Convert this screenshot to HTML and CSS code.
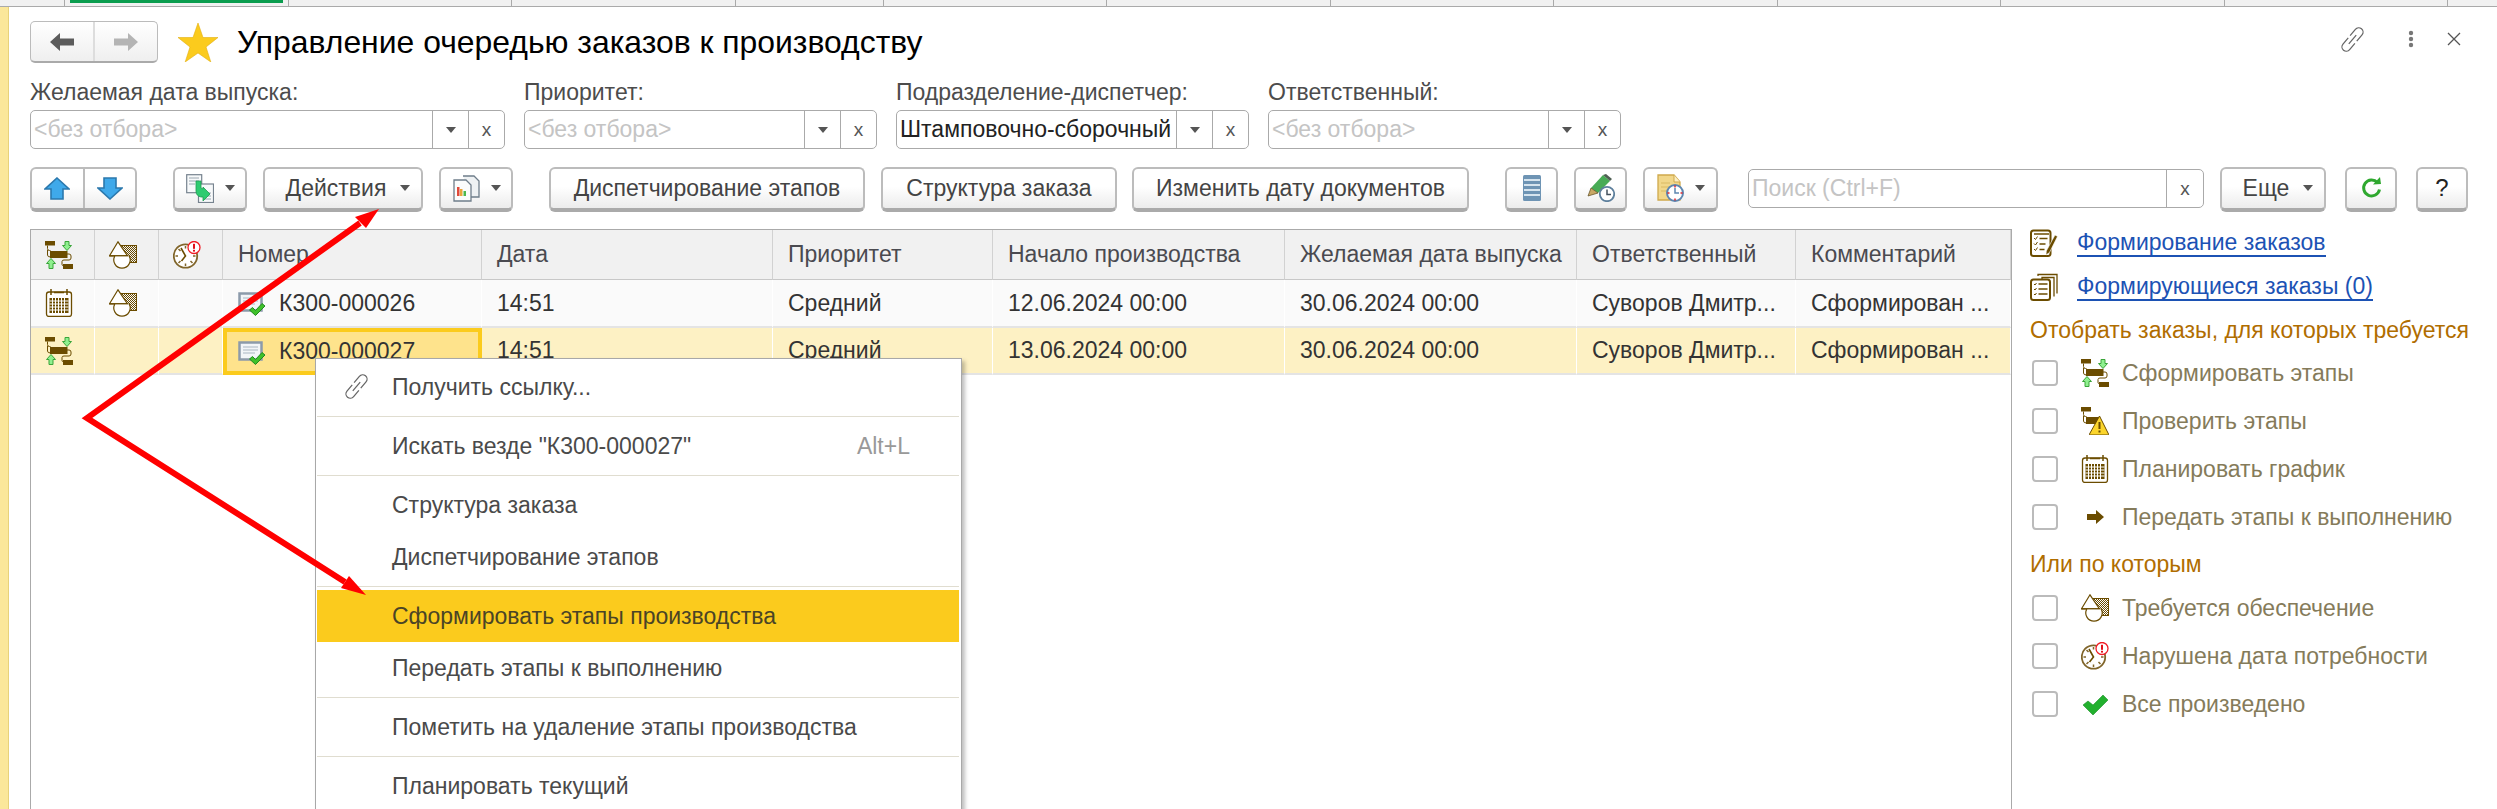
FILE: index.html
```html
<!DOCTYPE html>
<html>
<head>
<meta charset="UTF-8">
<title>Управление очередью заказов к производству</title>
<link rel="stylesheet" href="styles.css">
</head>
<body>
	<!-- общие значки -->
	<svg class="defs">
		<defs>
			<pattern id="hatch" width="2" height="2" patternUnits="userSpaceOnUse">
				<rect width="1" height="1" fill="#6b4c00"/>
				<rect x="1" y="1" width="1" height="1" fill="#6b4c00"/>
			</pattern>
		</defs>
		<symbol id="iStages" viewBox="0 0 28 28">
			<path d="M2.500 4.500v3q0 2 2 2h1M2.500 9v5q0 2 3 2M22 13h2q2 0 2 2v2q0 2-2 2h-5q-2 0-2 1.500v3q0 1 1 1" fill="none" stroke="#6b4c00"/>
			<rect x="0" y="0" width="10" height="4.500" fill="#6b4c00"/>
			<rect x="5" y="10" width="17.500" height="7" fill="#6b4c00"/>
			<rect x="18" y="23" width="10" height="5" fill="#6b4c00"/>
			<path d="M20 .5h4v4h2.500l-4.500 5-4.500-5h2.500z" fill="#8ff08f" stroke="#3aa53a"/>
			<path d="M6 17.500l4.500 5h-2.500v5h-4v-5h-2.500z" fill="#8ff08f" stroke="#3aa53a"/>
		</symbol>
		<symbol id="iCheckStages" viewBox="0 0 28 28">
			<path d="M2.500 4.500v3q0 2 2 2h1M2.500 9v5q0 2 3 2" fill="none" stroke="#6b4c00"/>
			<rect x="0" y="0" width="10" height="4.500" fill="#6b4c00"/>
			<rect x="5" y="10" width="14" height="7" fill="#6b4c00"/>
			<path d="M18.500 9l9 18q.3 1-1 1h-17q-1.300 0-1-1z" fill="#fbd52c" stroke="#6b4c00"/>
			<rect x="17.500" y="15" width="2" height="7" fill="#6b4c00"/>
			<rect x="17.500" y="23.500" width="2" height="2" fill="#6b4c00"/>
		</symbol>
		<symbol id="iSupply" viewBox="0 0 28 28">
			<rect x="11" y="4.500" width="16.500" height="17" fill="url(#hatch)" stroke="#6b4c00"/>
			<path d="M9 .8l9.500 14h-18z" fill="#fff" stroke="#6b4c00" stroke-width="1.200"/>
			<path d="M5.800 15a8.200 8.200 0 1 0 14.400 0z" fill="#fff"/>
			<path d="M5.800 15a8.200 8.200 0 1 0 14.400 0" fill="none" stroke="#6b4c00" stroke-width="1.200"/>
			<path d="M.5 14.800h19" stroke="#6b4c00" stroke-width="1.200"/>
		</symbol>
		<symbol id="iClock" viewBox="0 0 28 28">
			<circle cx="12.500" cy="15" r="11.700" fill="#fff" stroke="#80652a" stroke-width="1.800"/>
			<path d="M12.500 5v2.500M12.500 22.500v2.500M2.500 15h2.500M20 15h2.500M5.500 8l2 2M5.500 22l2-2M19.500 22l-2-2" stroke="#80652a" stroke-width="1.500"/>
			<path d="M8 7l4.500 8-4 5" fill="none" stroke="#6b4c00" stroke-width="1.600"/>
			<circle cx="21" cy="6.500" r="6" fill="#fff" stroke="#f01c24" stroke-width="1.300"/>
			<rect x="20" y="2.800" width="2" height="5" fill="#e01018"/>
			<rect x="20" y="8.800" width="2" height="1.800" fill="#e01018"/>
		</symbol>
		<symbol id="iCalendar" viewBox="0 0 28 28">
			<rect x="1.500" y="3" width="25" height="24.500" rx="2.500" fill="#fff" stroke="#6b4c00" stroke-width="1.300"/>
			<path d="M6 0v6M22 0v6M9 3.500h10" stroke="#6b4c00" stroke-width="1.500" fill="none"/>
			<rect x="4.500" y="9" width="19" height="15" fill="#6b4c00"/>
			<path d="M7.500 9v15M10.500 9v15M13.500 9v15M16.500 9v15M19.500 9v15M4.500 12h19M4.500 15h19M4.500 18h19M4.500 21h19" stroke="#fff" stroke-width="1"/>
		</symbol>
		<symbol id="iDocCheck" viewBox="0 0 28 24">
			<rect x="1.500" y="1.500" width="22" height="17" fill="#f2f5f8" stroke="#8c9aaa" stroke-width="2.500"/>
			<path d="M5 6h15M5 9h15M5 12h12" stroke="#a9b6c2" stroke-width="1"/>
			<path d="M14.500 15.500l3 3 6.500-7 3 2.500-9.500 9.500-6-5.500z" fill="#3fc02a" stroke="#1f8a1f"/>
		</symbol>
		<symbol id="iListPen" viewBox="0 0 28 28">
			<rect x="1" y="1.500" width="19.500" height="25.500" rx="2.500" fill="#fff" stroke="#6b4c00" stroke-width="2"/>
			<path d="M4 5h15" stroke="#6b4c00" stroke-width="1.500"/>
			<path d="M4 9l1.500 1.500 2-3M4 14.500l1.500 1.500 2-3M4 20l1.500 1.500 2-3" fill="none" stroke="#6b4c00"/>
			<path d="M9.500 9.500h8M9.500 15h6M9.500 20.500h5" stroke="#6b4c00" stroke-width="1.500"/>
			<path d="M25 6l2.500 1.500-8 16-3.500 2.500.3-4z" fill="#6b4c00" stroke="#fff" stroke-width=".6"/>
		</symbol>
		<symbol id="iListStack" viewBox="0 0 28 28">
			<path d="M8 3V1.500h19v19M12 6.500V4.500h12v19" fill="none" stroke="#6b4c00" stroke-width="1.300"/>
			<rect x="1" y="6.500" width="19" height="20.500" rx="2.500" fill="#fff" stroke="#6b4c00" stroke-width="2"/>
			<path d="M4 11l1 1 1.500-2M4 16l1 1 1.500-2M4 21l1 1 1.500-2" fill="none" stroke="#6b4c00"/>
			<path d="M8.500 11h9M8.500 16h9M8.500 21h9" stroke="#6b4c00" stroke-width="1.500"/>
		</symbol>
		<symbol id="iLink" viewBox="0 0 28 28">
			<g transform="rotate(-50 14 14)" fill="none" stroke="#666" stroke-width="1.300">
				<path d="M12.500 9.500H4a4.500 4.500 0 0 0 0 9h8.500"/>
				<path d="M15.500 9.500H24a4.500 4.500 0 0 1 0 9h-8.500"/>
				<path d="M8 14h12"/>
			</g>
		</symbol>
	</svg>

	<div class="tabs">
		<div class="tab tabFirst"></div>
		<div class="tab tabActive"><span class="tabMark"></span></div>
		<div class="tab"></div>
		<div class="tab"></div>
		<div class="tab tabShort"></div>
		<div class="tab"></div>
		<div class="tab"></div>
		<div class="tab"></div>
		<div class="tab"></div>
		<div class="tab"></div>
		<div class="tab"></div>
		<div class="tab"></div>
	</div>

	<div class="form">
		<div class="titleRow">
			<div class="navButtons">
				<button class="navBtn">
					<svg width="24" height="18" viewBox="0 0 24 18"><path d="M0 9l10-9v5.500h14v7h-14v5.500z" fill="#5c5c5c"/></svg>
				</button>
				<button class="navBtn">
					<svg width="24" height="18" viewBox="0 0 24 18"><path d="M24 9l-10-9v5.500h-14v7h14v5.500z" fill="#b4b4b4"/></svg>
				</button>
			</div>
			<svg class="star" width="40" height="39" viewBox="0 0 40 39"><path d="M20 0l5 14.500h15l-12 9.500 4.800 15-12.800-9-12.800 9 4.800-15-12-9.500h15z" fill="#fbcb1d" stroke="#e2ae10" stroke-width=".6"/></svg>
			<h1 class="title">Управление очередью заказов к производству</h1>
			<div class="titleTools">
				<svg class="toolLink" width="27" height="27"><use href="#iLink"/></svg>
				<svg class="dots" width="6" height="18" viewBox="0 0 6 18"><circle cx="3" cy="3" r="2.200" fill="#777"/><circle cx="3" cy="9" r="2.200" fill="#777"/><circle cx="3" cy="15" r="2.200" fill="#777"/></svg>
				<svg width="14" height="14" viewBox="0 0 14 14"><path d="M1 1l12 12M13 1l-12 12" stroke="#555" stroke-width="1.300"/></svg>
			</div>
		</div>

		<div class="filters">
			<div class="filter">
				<label class="filterLabel">Желаемая дата выпуска:</label>
				<div class="field"><span class="fieldText empty">&lt;без отбора&gt;</span><span class="fieldBtn"><i class="caret"></i></span><span class="fieldBtn">x</span></div>
			</div>
			<div class="filter">
				<label class="filterLabel">Приоритет:</label>
				<div class="field"><span class="fieldText empty">&lt;без отбора&gt;</span><span class="fieldBtn"><i class="caret"></i></span><span class="fieldBtn">x</span></div>
			</div>
			<div class="filter">
				<label class="filterLabel">Подразделение-диспетчер:</label>
				<div class="field"><span class="fieldText">Штамповочно-сборочный</span><span class="fieldBtn"><i class="caret"></i></span><span class="fieldBtn">x</span></div>
			</div>
			<div class="filter">
				<label class="filterLabel">Ответственный:</label>
				<div class="field"><span class="fieldText empty">&lt;без отбора&gt;</span><span class="fieldBtn"><i class="caret"></i></span><span class="fieldBtn">x</span></div>
			</div>
		</div>

		<div class="toolbar">
			<div class="btn btnPair">
				<span class="pairPart">
					<svg width="26" height="23" viewBox="0 0 26 23"><path d="M13 1l12 11h-6v10h-12v-10h-6z" fill="#3fa9ea" stroke="#2b78ad" stroke-width="1.600"/></svg>
				</span>
				<span class="pairPart">
					<svg width="26" height="23" viewBox="0 0 26 23"><path d="M13 22l12-11h-6v-10h-12v10h-6z" fill="#3fa9ea" stroke="#2b78ad" stroke-width="1.600"/></svg>
				</span>
			</div>
			<div class="btn w74 gapWide">
				<svg width="28" height="29" viewBox="0 0 28 29">
					<rect x=".7" y=".7" width="15" height="18" fill="#f7f9fa" stroke="#77838f" stroke-width="1.200"/>
					<path d="M3 4h10M3 7h10M3 10h6" stroke="#9aa6b0"/>
					<rect x="12.500" y="10" width="15" height="18.500" fill="#f7f9fa" stroke="#77838f" stroke-width="1.200"/>
					<path d="M17 19h8M17 22h8M17 25h8" stroke="#9aa6b0"/>
					<path d="M10 7h5v7l2 1v-2l7 7-7 7v-4h-2q-5-1-5-6z" fill="#2ecb70" stroke="#1e9c50" stroke-width=".8"/>
				</svg>
				<i class="caret caretIcon"></i>
			</div>
			<button class="btn btnMenu w160">Действия<i class="caret caretText"></i></button>
			<div class="btn w74">
				<svg width="28" height="27" viewBox="0 0 28 27">
					<path d="M11 1h11l5 5v16h-8" fill="#eef1f3" stroke="#6f7d8a" stroke-width="1.300"/>
					<path d="M2 5h12l5 5v16h-17z" fill="#fbfcfc" stroke="#6f7d8a" stroke-width="1.300"/>
					<rect x="5" y="12" width="2.500" height="9" fill="#e04a3a"/>
					<rect x="8" y="14" width="2.500" height="7" fill="#e8a53a"/>
					<rect x="11.500" y="16" width="2.500" height="5" fill="#4cb84c"/>
				</svg>
				<i class="caret caretIcon"></i>
			</div>
			<button class="btn w316 gapWide">Диспетчирование этапов</button>
			<button class="btn w236">Структура заказа</button>
			<button class="btn w337 gapNarrow">Изменить дату документов</button>
			<div class="btn w53 gapWide">
				<svg width="18" height="26" viewBox="0 0 18 26">
					<rect width="18" height="26" rx="1.500" fill="#6e94b4"/>
					<path d="M1 5h16M1 10h16M1 15h16M1 20h16" stroke="#d6e4ee" stroke-width="2"/>
				</svg>
			</div>
			<div class="btn w53">
				<svg width="28" height="28" viewBox="0 0 28 28">
					<path d="M16 1l7 6-12 12-7-5z" fill="#48ab55"/>
					<path d="M16 1l3-1 6 5-2 2z" fill="#4e5f52"/>
					<path d="M4 14l7 5-10 3z" fill="#c9a865" stroke="#5a4a20" stroke-width=".7"/>
					<circle cx="20" cy="20" r="7.200" fill="#fff" stroke="#5d7f9c" stroke-width="1.800"/>
					<path d="M20 15.500v5h4" fill="none" stroke="#44525e" stroke-width="1.500"/>
				</svg>
			</div>
			<div class="btn w75">
				<svg width="28" height="28" viewBox="0 0 28 28">
					<path d="M1 1h16l6 7v18h-22z" fill="#f1d78a" stroke="#cfa94c" stroke-width="1.300"/>
					<path d="M17 1v7h6" fill="#fbeec2" stroke="#cfa94c"/>
					<path d="M4 9h9M4 13h9M4 17h5" stroke="#d9b962"/>
					<circle cx="18" cy="19" r="8" fill="#fff" stroke="#5d86b0" stroke-width="2"/>
					<path d="M18 14v5h4" fill="none" stroke="#5d86b0" stroke-width="1.500"/>
					<path d="M18 11.500v2M18 24.500v2M10.500 19h2M23.500 19h2" stroke="#e0202a" stroke-width="1.500"/>
				</svg>
				<i class="caret caretSmall"></i>
			</div>
			<div class="field searchField"><span class="fieldText empty">Поиск (Ctrl+F)</span><span class="fieldBtn">x</span></div>
			<button class="btn btnMenu w106">Еще<i class="caret caretText"></i></button>
			<div class="btn w52 gapMid">
				<svg width="22" height="22" viewBox="0 0 22 22">
					<path d="M17.500 5.500a8 8 0 1 0 2 7" fill="none" stroke="#2fa82f" stroke-width="3"/>
					<path d="M13 7.500l8-.5-1-7z" fill="#2fa82f"/>
				</svg>
			</div>
			<button class="btn w52 gapMid btnHelp">?</button>
		</div>

		<div class="content">
			<div class="gridBox">
				<table class="grid">
					<colgroup>
						<col class="c64"><col class="c64"><col class="c64"><col class="c259"><col class="c291">
						<col class="c220"><col class="c292"><col class="c292"><col class="c219"><col>
					</colgroup>
					<tr class="gridHead">
						<th class="iconCell"><svg class="ico"><use href="#iStages"/></svg></th>
						<th class="iconCell"><svg class="ico"><use href="#iSupply"/></svg></th>
						<th class="iconCell"><svg class="ico"><use href="#iClock"/></svg></th>
						<th>Номер</th>
						<th>Дата</th>
						<th>Приоритет</th>
						<th>Начало производства</th>
						<th>Желаемая дата выпуска</th>
						<th>Ответственный</th>
						<th>Комментарий</th>
					</tr>
					<tr class="gridRow">
						<td class="iconCell"><svg class="ico"><use href="#iCalendar"/></svg></td>
						<td class="iconCell"><svg class="ico"><use href="#iSupply"/></svg></td>
						<td class="iconCell"></td>
						<td class="numberCell"><svg class="docIco"><use href="#iDocCheck"/></svg>К300-000026</td>
						<td>14:51</td>
						<td>Средний</td>
						<td>12.06.2024 00:00</td>
						<td>30.06.2024 00:00</td>
						<td>Суворов Дмитр...</td>
						<td>Сформирован ...</td>
					</tr>
					<tr class="gridRow rowCurrent">
						<td class="iconCell"><svg class="ico"><use href="#iStages"/></svg></td>
						<td class="iconCell"></td>
						<td class="iconCell"></td>
						<td class="numberCell cellCurrent"><svg class="docIco"><use href="#iDocCheck"/></svg>К300-000027</td>
						<td>14:51</td>
						<td>Средний</td>
						<td>13.06.2024 00:00</td>
						<td>30.06.2024 00:00</td>
						<td>Суворов Дмитр...</td>
						<td>Сформирован ...</td>
					</tr>
				</table>
			</div>

			<aside class="side">
				<a class="sideLink" href="#"><svg class="ico"><use href="#iListPen"/></svg><span>Формирование заказов</span></a>
				<a class="sideLink" href="#"><svg class="ico"><use href="#iListStack"/></svg><span>Формирующиеся заказы (0)</span></a>
				<h4 class="sideHead">Отобрать заказы, для которых требуется</h4>
				<div class="checkRow"><span class="checkBox"></span><svg class="ico"><use href="#iStages"/></svg><span>Сформировать этапы</span></div>
				<div class="checkRow"><span class="checkBox"></span><svg class="ico"><use href="#iCheckStages"/></svg><span>Проверить этапы</span></div>
				<div class="checkRow"><span class="checkBox"></span><svg class="ico"><use href="#iCalendar"/></svg><span>Планировать график</span></div>
				<div class="checkRow"><span class="checkBox"></span><svg class="ico" viewBox="0 0 28 28"><path d="M6 11h9V7l8 7-8 7v-4H6z" fill="#6b4c00"/></svg><span>Передать этапы к выполнению</span></div>
				<h4 class="sideHead sideHeadNext">Или по которым</h4>
				<div class="checkRow"><span class="checkBox"></span><svg class="ico"><use href="#iSupply"/></svg><span>Требуется обеспечение</span></div>
				<div class="checkRow"><span class="checkBox"></span><svg class="ico"><use href="#iClock"/></svg><span>Нарушена дата потребности</span></div>
				<div class="checkRow"><span class="checkBox"></span><svg class="ico" viewBox="0 0 28 28"><path d="M2 15l5-4 5 4L22 5l5 5-15 15z" fill="#22b02e" stroke="#1b8f26" stroke-width=".6"/></svg><span>Все произведено</span></div>
			</aside>
		</div>
	</div>

	<!-- контекстное меню -->
	<div class="menu">
		<div class="menuGroup menuGroupFirst">
			<div class="menuItem"><svg class="menuIco"><use href="#iLink"/></svg>Получить ссылку...</div>
		</div>
		<div class="menuGroup">
			<div class="menuItem">Искать везде "К300-000027"<span class="menuKey">Alt+L</span></div>
		</div>
		<div class="menuGroup">
			<div class="menuItem">Структура заказа</div>
			<div class="menuItem">Диспетчирование этапов</div>
		</div>
		<div class="menuGroup">
			<div class="menuItem menuItemHot">Сформировать этапы производства</div>
			<div class="menuItem">Передать этапы к выполнению</div>
		</div>
		<div class="menuGroup">
			<div class="menuItem">Пометить на удаление этапы производства</div>
		</div>
		<div class="menuGroup">
			<div class="menuItem">Планировать текущий</div>
		</div>
	</div>

	<!-- красные стрелки поверх всего -->
	<svg class="arrows" width="2497" height="809" viewBox="0 0 2497 809">
		<path d="M360 223L87 418L345 582" fill="none" stroke="#ff0000" stroke-width="6"/>
		<path d="M379 209L355 217L366 228z" fill="#ff0000"/>
		<path d="M366 595L341 588L349 576z" fill="#ff0000"/>
	</svg>
</body>
</html>
```

FILE: styles.css
```css
* {
	box-sizing: border-box;
}

html, body {
	height: 100%;
}

body {
	margin: 0;
	overflow: hidden;
	position: relative;
	display: flex;
	flex-direction: column;
	background-color: #fff;
	font-family: "Liberation Sans", Arial, sans-serif;
	font-size: 23px;
	color: #444;
}

.defs {
	display: block;
	width: 0;
	height: 0;
}

/* верхняя полоса вкладок */
.tabs {
	display: flex;
	flex: none;
	height: 7px;
	background-color: #f1f1f1;
	border-bottom: 1px solid #aaa;
}

.tab {
	flex: none;
	width: 223.500px;
	border-right: 1px solid #aaa;
}

.tabFirst {
	width: 65px;
}

.tabShort {
	width: 148px;
}

.tabActive {
	padding: 0 5px;
}

.tabMark {
	display: block;
	height: 3px;
	background-color: #0a9d4e;
}

.form {
	flex: 1;
	min-height: 0;
	display: flex;
	flex-direction: column;
	padding: 14px 0 0 22px;
	border-left: 8px solid #fbe79a;
	box-shadow: inset 1px 0 0 #e8d27a;
}

.titleRow {
	display: flex;
	align-items: center;
	height: 42px;
}

.navButtons {
	display: flex;
	width: 128px;
	height: 42px;
	border: 1px solid #bbb;
	border-bottom: 2px solid #aaa;
	border-radius: 5px;
	background: linear-gradient(#fff, #efefef);
}

.navBtn {
	flex: 1;
	display: flex;
	align-items: center;
	justify-content: center;
	padding: 0;
	border: 0;
	border-right: 2px solid #ddd;
	background: none;
}

.navBtn:last-child {
	border-right: 0;
}

.star {
	margin-left: 20px;
	flex: none;
}

.title {
	margin: 0 0 0 19px;
	font-size: 31.900px;
	font-weight: normal;
	color: #000;
}

.titleTools {
	display: flex;
	align-items: center;
	gap: 33px;
	margin-left: auto;
	padding: 0 36px 6px 0;
}

.toolLink {
	margin-right: 9px;
}

.filters {
	display: grid;
	grid-template-columns: 475px 353px 353px 353px;
	column-gap: 19px;
	margin-top: 17px;
}

.filterLabel {
	display: block;
	height: 30px;
	line-height: 24px;
	color: #4c4c4c;
}

.field {
	display: flex;
	height: 39px;
	border: 1px solid #aaa;
	border-radius: 5px;
	background-color: #fff;
}

.fieldText {
	flex: 1;
	min-width: 0;
	padding-left: 3px;
	line-height: 36px;
	color: #222;
	white-space: nowrap;
	overflow: hidden;
}

.fieldText.empty {
	color: #c4c4c4;
}

.fieldBtn {
	flex: none;
	display: flex;
	align-items: center;
	justify-content: center;
	width: 36px;
	border-left: 1px solid #aaa;
	font-size: 19px;
	color: #555;
}

.caret {
	display: inline-block;
	width: 0;
	height: 0;
	border-left: 5px solid transparent;
	border-right: 5px solid transparent;
	border-top: 6px solid #555;
}

/* панель кнопок */
.toolbar {
	display: flex;
	align-items: flex-start;
	gap: 16px;
	margin-top: 18px;
	height: 45px;
}

.btn {
	flex: none;
	display: flex;
	align-items: center;
	justify-content: center;
	height: 45px;
	padding: 0 0 1px;
	border: 2px solid #bcbcbc;
	border-bottom: 4px solid #aaa;
	border-radius: 6px;
	background: linear-gradient(#fff 45%, #ececec);
	font-family: inherit;
	font-size: 23px;
	color: #444;
}

.btnMenu {
	padding-left: 10px;
}

.btnPair {
	width: 107px;
	padding: 0;
}

.pairPart {
	flex: 1;
	height: 100%;
	display: flex;
	align-items: center;
	justify-content: center;
	border-right: 2px solid #bcbcbc;
}

.pairPart:last-child {
	border-right: 0;
}

.btnHelp {
	color: #222;
	font-size: 24px;
}

.w52 { width: 52px; }
.w53 { width: 53px; }
.w74 { width: 74px; }
.w75 { width: 75px; }
.w106 { width: 106px; }
.w160 { width: 160px; }
.w236 { width: 236px; }
.w316 { width: 316px; }
.w337 { width: 337px; }

.gapWide {
	margin-left: 20px;
}

.gapNarrow {
	margin-left: -1px;
}

.gapMid {
	margin-left: 3px;
}

.caretIcon {
	margin-left: 11px;
}

.caretSmall {
	margin-left: 10px;
}

.caretText {
	margin-left: 14px;
}

.searchField {
	width: 456px;
	margin: 2px 0 0 14px;
}

.searchField .fieldBtn {
	width: 37px;
}

.content {
	flex: 1;
	min-height: 0;
	display: flex;
	margin-top: 17px;
}

.gridBox {
	flex: none;
	width: 1982px;
	border: 1px solid #aaa;
	border-bottom: 0;
	overflow: hidden;
}

.grid {
	width: 1980px;
	table-layout: fixed;
	border-collapse: separate;
	border-spacing: 0;
}

.c64 { width: 64px; }
.c259 { width: 259px; }
.c291 { width: 291px; }
.c220 { width: 220px; }
.c292 { width: 292px; }
.c219 { width: 219px; }

.grid th,
.grid td {
	padding: 0 0 0 15px;
	text-align: left;
	font-weight: normal;
	white-space: nowrap;
	overflow: hidden;
}

.grid .iconCell {
	padding: 0 8px 0 0;
	text-align: center;
}

.grid th {
	height: 50px;
	background-color: #f1f1f1;
	border-right: 1px solid #d2d2d2;
	border-bottom: 1px solid #c8c8c8;
	color: #4a4a50;
}

.grid td {
	height: 48px;
	background-color: #fafafa;
	border-right: 1px solid #fff;
	border-bottom: 2px solid #e4e4e4;
	color: #333;
}

.rowCurrent td {
	height: 47px;
	background-color: #fdf1c4;
}

.grid .cellCurrent {
	background-color: #fee38c;
	border: 4px solid #fbcb1d;
	padding-left: 11px;
}

.ico {
	width: 28px;
	height: 28px;
	flex: none;
	vertical-align: middle;
}

.docIco {
	width: 28px;
	height: 24px;
	margin-right: 13px;
	vertical-align: middle;
}

/* правая панель */
.side {
	flex: 1;
	padding-left: 18px;
}

.sideLink {
	display: flex;
	align-items: center;
	gap: 19px;
	height: 28px;
	margin-bottom: 16px;
	color: #1c52b4;
	text-decoration: none;
}

.sideLink span {
	line-height: 26px;
	border-bottom: 2px solid #1c52b4;
}

.sideHead {
	margin: 0 0 6px;
	height: 26px;
	line-height: 26px;
	font-size: inherit;
	font-weight: normal;
	color: #b06d00;
	white-space: nowrap;
}

.sideHeadNext {
	margin: 10px 0 7px;
}

.checkRow {
	display: flex;
	align-items: center;
	height: 48px;
	color: #857b5a;
}

.checkBox {
	flex: none;
	width: 26px;
	height: 26px;
	margin: 0 23px 0 2px;
	border: 2px solid #bbb;
	border-radius: 4px;
	background-color: #fff;
}

.checkRow .ico {
	margin-right: 13px;
}

/* контекстное меню */
.menu {
	position: absolute;
	left: 315px;
	top: 358px;
	width: 647px;
	height: 470px;
	padding: 0 2px 0 1px;
	background-color: #fff;
	border: 1px solid #a8a8a8;
	box-shadow: 3px 3px 4px rgba(0, 0, 0, .25);
}

.menuGroup {
	padding: 3px 0;
	border-bottom: 1px solid #e0ddd0;
}

.menuGroup:last-child {
	border-bottom: 0;
}

.menuGroupFirst {
	padding: 2px 0 3px;
}

.menuItem {
	position: relative;
	display: flex;
	align-items: center;
	height: 52px;
	padding-left: 75px;
	color: #4a4a4a;
	white-space: nowrap;
}

.menuItemHot {
	background-color: #fbcb1d;
	color: #4a4426;
}

.menuIco {
	position: absolute;
	left: 26px;
	top: 12px;
	width: 27px;
	height: 27px;
}

.menuKey {
	margin-left: auto;
	padding-right: 49px;
	color: #999;
}

.arrows {
	position: absolute;
	left: 0;
	top: 0;
}
```
